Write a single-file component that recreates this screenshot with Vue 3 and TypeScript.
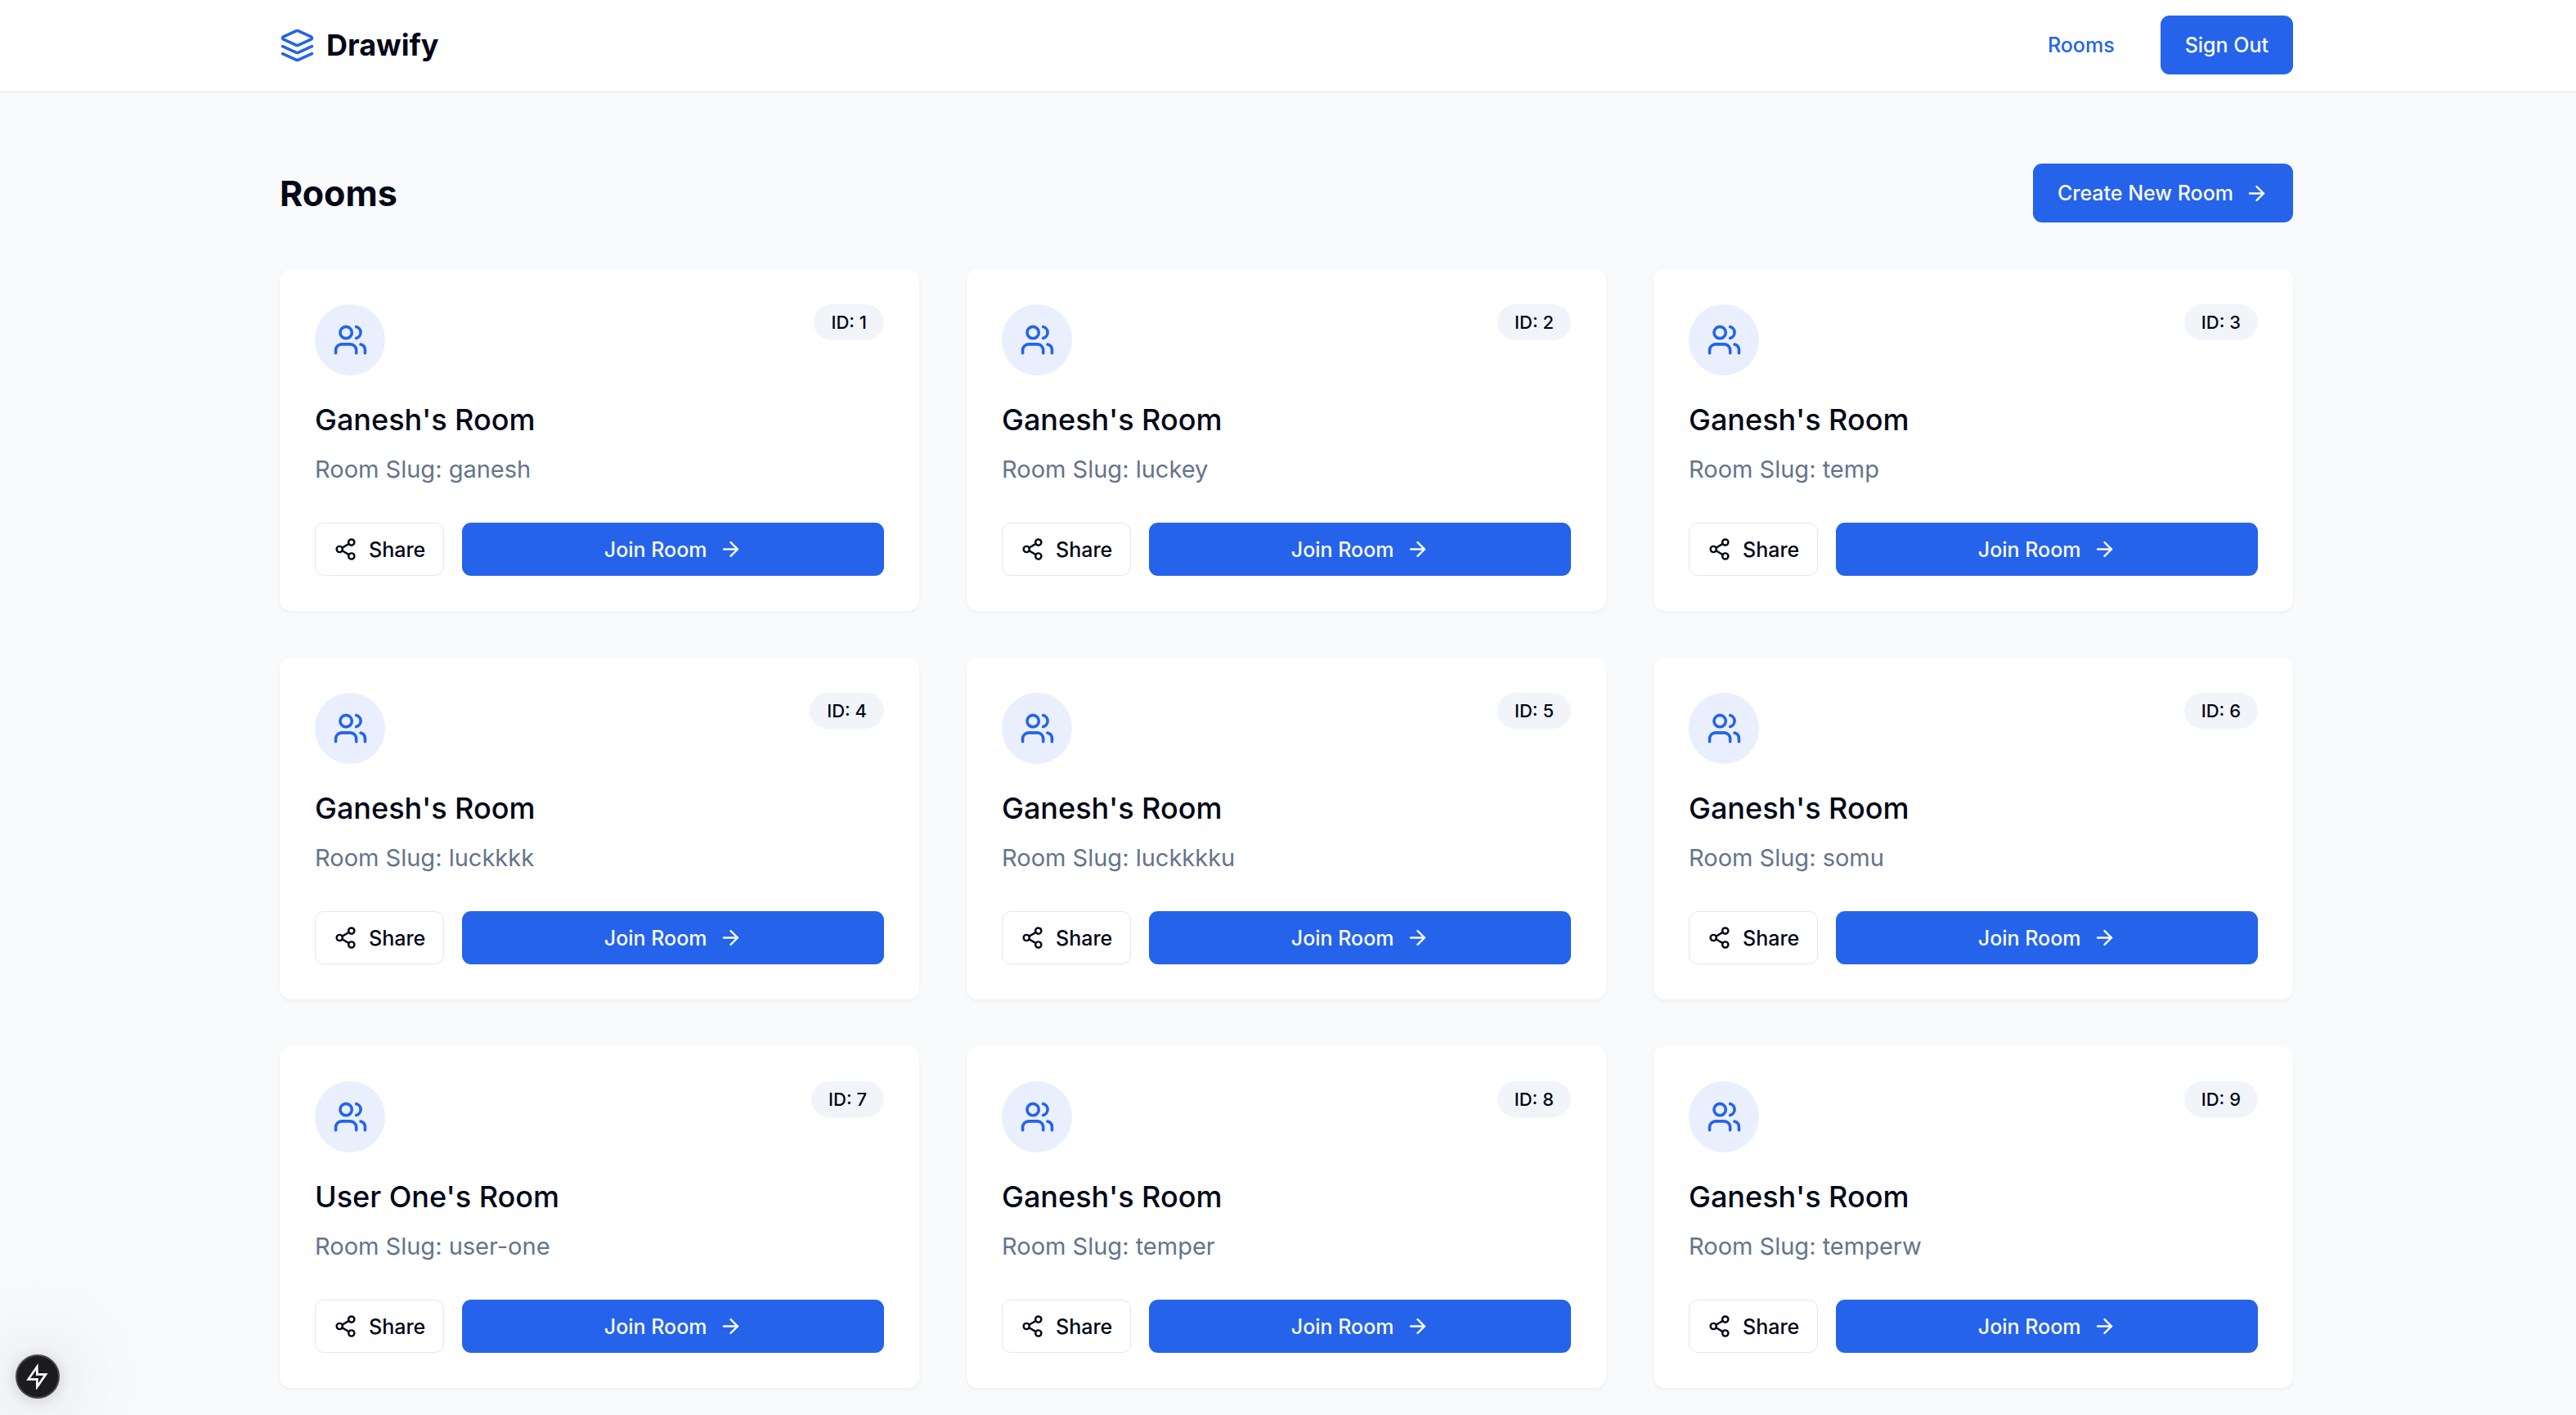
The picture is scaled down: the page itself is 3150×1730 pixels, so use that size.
<script setup lang="ts">
interface Room {
  id: number
  owner: string
  slug: string
}

const rooms: Room[] = [
  { id: 1, owner: 'Ganesh', slug: 'ganesh' },
  { id: 2, owner: 'Ganesh', slug: 'luckey' },
  { id: 3, owner: 'Ganesh', slug: 'temp' },
  { id: 4, owner: 'Ganesh', slug: 'luckkkk' },
  { id: 5, owner: 'Ganesh', slug: 'luckkkku' },
  { id: 6, owner: 'Ganesh', slug: 'somu' },
  { id: 7, owner: 'User One', slug: 'user-one' },
  { id: 8, owner: 'Ganesh', slug: 'temper' },
  { id: 9, owner: 'Ganesh', slug: 'temperw' },
]
</script>

<template>
  <div class="page">
    <header class="header">
      <div class="container bar">
        <a class="brand" href="#">
          <svg class="icon icon-lg" viewBox="0 0 24 24" aria-hidden="true">
            <path d="m12.83 2.18a2 2 0 0 0-1.66 0L2.6 6.08a1 1 0 0 0 0 1.83l8.58 3.91a2 2 0 0 0 1.66 0l8.58-3.9a1 1 0 0 0 0-1.83Z" />
            <path d="m22 17.65-9.17 4.16a2 2 0 0 1-1.66 0L2 17.65" />
            <path d="m22 12.65-9.17 4.16a2 2 0 0 1-1.66 0L2 12.65" />
          </svg>
          <span>Drawify</span>
        </a>
        <nav class="nav">
          <a class="nav-link" href="#rooms">Rooms</a>
          <button class="btn btn-primary btn-md" type="button">Sign Out</button>
        </nav>
      </div>
    </header>

    <main id="rooms" class="container main">
      <div class="bar heading">
        <h1>Rooms</h1>
        <button class="btn btn-primary btn-md" type="button">
          Create New Room
          <svg class="icon icon-sm" viewBox="0 0 24 24" aria-hidden="true">
            <path d="M5 12h14" />
            <path d="m12 5 7 7-7 7" />
          </svg>
        </button>
      </div>

      <div class="grid">
        <article v-for="room in rooms" :key="room.id" class="card">
          <div class="card-top">
            <span class="avatar">
              <svg class="icon icon-lg" viewBox="0 0 24 24" aria-hidden="true">
                <path d="M16 21v-2a4 4 0 0 0-4-4H6a4 4 0 0 0-4 4v2" />
                <circle cx="9" cy="7" r="4" />
                <path d="M22 21v-2a4 4 0 0 0-3-3.87" />
                <path d="M16 3.13a4 4 0 0 1 0 7.75" />
              </svg>
            </span>
            <span class="badge">ID: {{ room.id }}</span>
          </div>
          <h2>{{ room.owner }}'s Room</h2>
          <p class="slug">Room Slug: {{ room.slug }}</p>
          <div class="actions">
            <button class="btn btn-outline btn-sm" type="button">
              <svg class="icon icon-sm" viewBox="0 0 24 24" aria-hidden="true">
                <circle cx="18" cy="5" r="3" />
                <circle cx="6" cy="12" r="3" />
                <circle cx="18" cy="19" r="3" />
                <path d="m8.59 13.51 6.83 3.98" />
                <path d="m15.41 6.51-6.82 3.98" />
              </svg>
              Share
            </button>
            <button class="btn btn-primary btn-sm join" type="button">
              Join Room
              <svg class="icon icon-sm" viewBox="0 0 24 24" aria-hidden="true">
                <path d="M5 12h14" />
                <path d="m12 5 7 7-7 7" />
              </svg>
            </button>
          </div>
        </article>
      </div>
    </main>

    <button class="dev-badge" type="button" aria-label="Static route">
      <svg viewBox="0 0 24 24" aria-hidden="true">
        <path d="M11.500 3 3.500 14.500H11.500V21.500L19.500 10H11.500Z" />
      </svg>
    </button>
  </div>
</template>

<style>
body {
  margin: 0;
  background: #f9fafc;
}
</style>

<style scoped>
.page {
  min-height: 100vh;
  box-sizing: border-box;
  padding-right: 4px;
  background: #f9fafc;
  color: #020817;
  font-family: Inter, "Liberation Sans", sans-serif;
}

.container {
  box-sizing: border-box;
  width: 100%;
  max-width: 2520px;
  margin: 0 auto;
  padding: 0 29px;
}

.header {
  margin-right: -4px;
  padding: 19px 4px 21px 0;
  border-bottom: 1px solid #dde5ef;
  background: #fff;
}

.bar {
  display: flex;
  align-items: center;
  justify-content: space-between;
}

.brand {
  display: flex;
  align-items: center;
  gap: 14px;
  color: inherit;
  font-size: 36px;
  font-weight: 700;
  line-height: 50px;
  text-decoration: none;
}

.brand .icon {
  color: #2563eb;
}

.nav {
  display: flex;
  align-items: center;
  gap: 56px;
}

.nav-link {
  color: #2563eb;
  font-size: 25px;
  font-weight: 500;
  line-height: 36px;
  text-decoration: none;
}

.icon {
  flex: none;
  fill: none;
  stroke: currentColor;
  stroke-width: 2;
  stroke-linecap: round;
  stroke-linejoin: round;
}

.icon-lg {
  width: 43px;
  height: 43px;
}

.icon-sm {
  width: 29px;
  height: 29px;
}

.btn {
  display: inline-flex;
  align-items: center;
  justify-content: center;
  gap: 14px;
  box-sizing: border-box;
  border: 0;
  border-radius: 11px;
  font-family: inherit;
  font-size: 25px;
  font-weight: 500;
  line-height: 36px;
  white-space: nowrap;
  cursor: pointer;
}

.btn-md {
  height: 72px;
  padding: 0 30px;
}

.btn-sm {
  height: 65px;
  padding: 0 22px;
}

.btn-primary {
  background: #2563eb;
  color: #f8fafc;
}

.btn-outline {
  border: 1px solid #e2e8f0;
  background: #fff;
  color: inherit;
}

.main {
  padding-top: 87px;
  padding-bottom: 58px;
}

.heading {
  margin-bottom: 57px;
}

h1,
h2,
p {
  margin: 0;
}

h1 {
  font-size: 43px;
  font-weight: 700;
  line-height: 57px;
}

.grid {
  display: grid;
  grid-template-columns: repeat(3, minmax(0, 1fr));
  gap: 57px 58px;
}

.card {
  padding: 43px;
  border-radius: 14px;
  background: #fff;
  box-shadow: 0 2px 4px rgba(0, 0, 0, 0.05);
}

.card-top {
  display: flex;
  align-items: flex-start;
  justify-content: space-between;
  margin-bottom: 29px;
}

.avatar {
  display: flex;
  align-items: center;
  justify-content: center;
  width: 86px;
  height: 87px;
  border-radius: 50%;
  background: #e9effd;
  color: #2563eb;
}

.badge {
  padding: 6px 21px;
  border-radius: 22px;
  background: #f1f5f9;
  font-size: 22px;
  font-weight: 500;
  line-height: 32px;
}

h2 {
  margin-bottom: 14px;
  font-size: 36px;
  font-weight: 500;
  line-height: 50px;
}

.slug {
  margin-bottom: 43px;
  color: #64748b;
  font-size: 29px;
  line-height: 44px;
}

.actions {
  display: flex;
  gap: 22px;
}

.join {
  flex: 1;
}

.dev-badge {
  position: fixed;
  bottom: 20px;
  left: 19px;
  display: flex;
  align-items: center;
  justify-content: center;
  width: 54px;
  height: 54px;
  padding: 0;
  border: 2px solid #48484a;
  border-radius: 50%;
  background: #1c1c1e;
  box-shadow: 0 2px 20px rgba(0, 0, 0, 0.16), 0 4px 110px rgba(0, 0, 0, 0.3);
}

.dev-badge svg {
  width: 32px;
  height: 32px;
  fill: none;
  stroke: #fff;
  stroke-width: 2;
}
</style>
